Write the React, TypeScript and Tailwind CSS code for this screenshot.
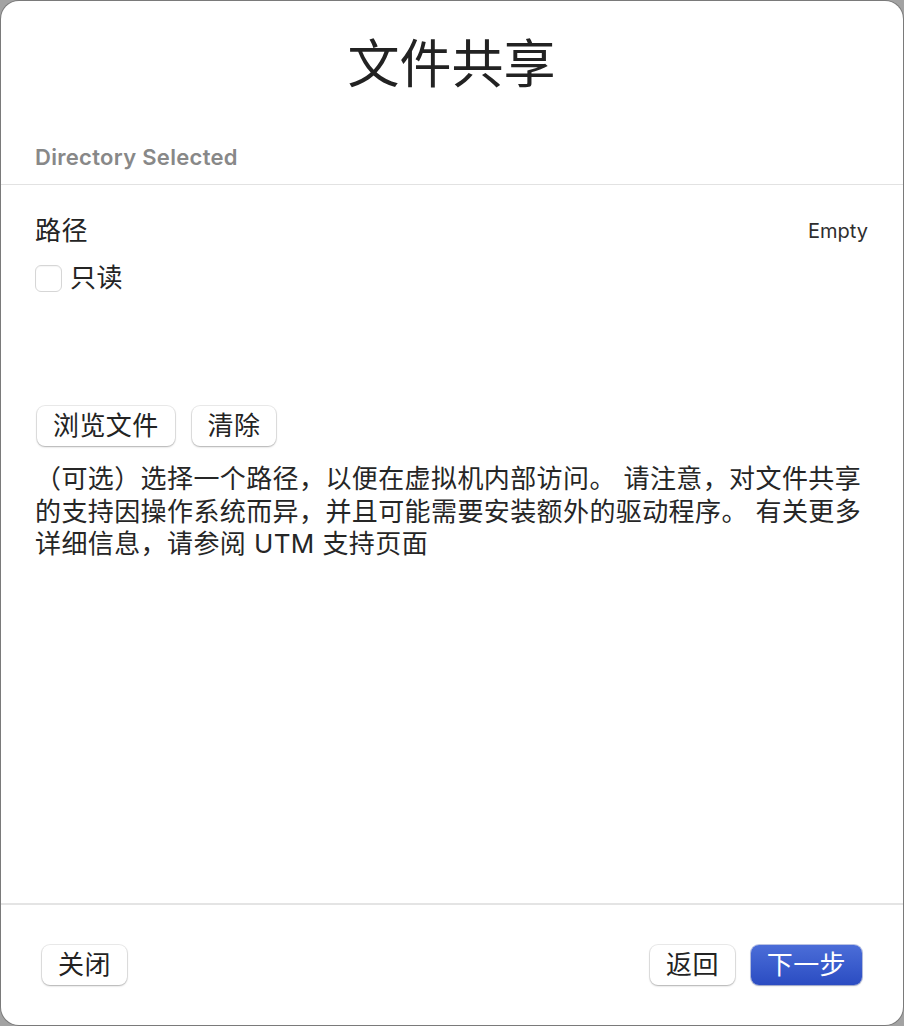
import React from "react";

const font = { fontFamily: "Inter, 'Noto Sans CJK SC', sans-serif" };

function Btn({ children, className = "" }: { children: React.ReactNode; className?: string }) {
  return (
    <button
      className={
        "h-[40px] px-[16px] rounded-[8px] bg-white text-[26px] leading-[32px] tracking-[0.4px] text-[#232323] shadow-[0_0_0_1px_rgba(0,0,0,0.08),0_1px_2px_rgba(0,0,0,0.25)] " +
        className
      }
    >
      {children}
    </button>
  );
}

export default function App() {
  return (
    <div className="w-[904px] h-[1026px] bg-[#a3a3a3] p-px" style={font}>
      <div className="w-full h-full bg-white rounded-[18px] flex flex-col overflow-hidden shadow-[0_0_0_1px_rgba(0,0,0,0.25)]">
        <div className="pt-[33px] pb-[14px] pl-[34px] pr-[35px] border-b border-[#e2e2e2]">
          <h1 className="text-center text-[52px] leading-[62px] text-[#222]">文件共享</h1>
          <div className="mt-[49px] text-[22px] leading-[25px] tracking-[0.3px] font-semibold text-[#888]">
            Directory Selected
          </div>
        </div>
        <div className="flex-1 pl-[34px] pr-[35px] pt-[30px] text-[#242424]">
          <div className="flex items-center justify-between">
            <span className="text-[26px] leading-[32px] tracking-[0.4px]">路径</span>
            <span className="text-[20px] leading-[24px] text-[#2e2e2e]">Empty</span>
          </div>
          <label className="mt-[15px] flex items-center gap-[8px]">
            <span className="w-[27px] h-[27px] rounded-[6px] bg-white border border-[#d6d6d6] shadow-[inset_0_1px_1px_rgba(0,0,0,0.04)]" />
            <span className="text-[26px] leading-[32px] tracking-[0.4px]">只读</span>
          </label>
          <div className="mt-[112px] flex gap-[17px] pl-[2px]">
            <Btn>浏览文件</Btn>
            <Btn>清除</Btn>
          </div>
          <p className="mt-[17px] text-[26px] leading-[32.5px] tracking-[0.4px] text-[#262626]">
            （可选）选择一个路径，以便在虚拟机内部访问。 请注意，对文件共享的支持因操作系统而异，并且可能需要安装额外的驱动程序。 有关更多详细信息，请参阅 UTM 支持页面
          </p>
        </div>
        <div className="border-t-2 border-[#e4e4e4] pt-[40px] pb-[40px] pl-[41px] pr-[41px] flex items-center justify-between">
          <Btn>关闭</Btn>
          <div className="flex gap-[16px]">
            <Btn>返回</Btn>
            <button className="h-[40px] px-[16px] rounded-[8px] text-[26px] leading-[32px] tracking-[0.4px] text-white bg-gradient-to-b from-[#4b6dd8] to-[#2b4cc2] shadow-[0_0_0_1px_rgba(30,60,170,0.3),0_1px_2px_rgba(0,0,0,0.2)]">
              下一步
            </button>
          </div>
        </div>
      </div>
    </div>
  );
}
